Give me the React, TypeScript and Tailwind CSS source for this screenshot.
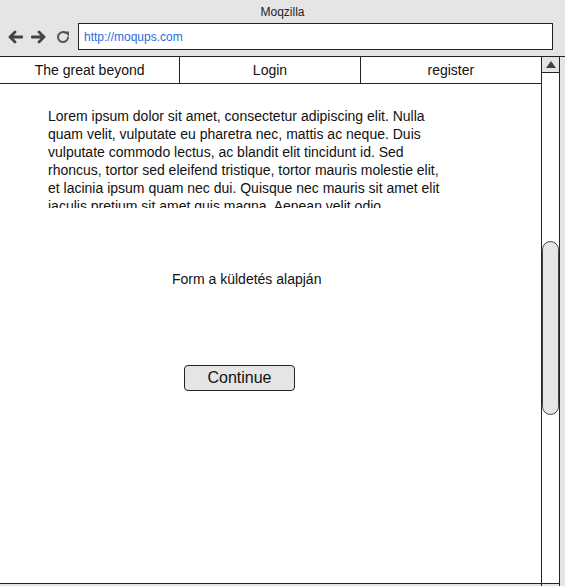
import React from 'react';

const navItems = ['The great beyond', 'Login', 'register'];

const lorem =
  'Lorem ipsum dolor sit amet, consectetur adipiscing elit. Nulla quam velit, vulputate eu pharetra nec, mattis ac neque. Duis vulputate commodo lectus, ac blandit elit tincidunt id. Sed rhoncus, tortor sed eleifend tristique, tortor mauris molestie elit, et lacinia ipsum quam nec dui. Quisque nec mauris sit amet elit iaculis pretium sit amet quis magna. Aenean velit odio, elementum in tempus ut, vehicula eu diam.';

// Browser chrome arrows + reload, drawn as they look in the mockup
const BackIcon = () => (
  <svg width="16" height="14" viewBox="0 0 16 14" className="text-[#444]">
    <path d="M15 7H3M8 2L3 7l5 5" fill="none" stroke="currentColor" strokeWidth="2.8" strokeLinecap="round" strokeLinejoin="round" />
  </svg>
);

const ForwardIcon = () => (
  <svg width="16" height="14" viewBox="0 0 16 14" className="text-[#444]">
    <path d="M1 7h12M8 2l5 5-5 5" fill="none" stroke="currentColor" strokeWidth="2.8" strokeLinecap="round" strokeLinejoin="round" />
  </svg>
);

const ReloadIcon = () => (
  <svg width="16" height="16" viewBox="0 0 16 16" className="text-[#555]">
    <path d="M13 8.5A5 5 0 1 1 11 4" fill="none" stroke="currentColor" strokeWidth="2" strokeLinecap="round" />
    <path d="M9 2.5h5v5z" fill="currentColor" />
  </svg>
);

const Scrollbar = () => (
  <div className="w-[19px] flex flex-col border-x border-[#222] bg-white">
    {/* Up arrow */}
    <div className="h-[16px] flex items-center justify-center border-b border-[#222] bg-[#e5e5e5]">
      <svg width="10" height="7" viewBox="0 0 10 7">
        <path d="M5 0l5 7H0z" fill="#444" />
      </svg>
    </div>
    {/* Track */}
    <div className="h-[510px] flex flex-col">
      <div className="h-[168px]" />
      <div className="h-[174px] rounded-full border border-[#444] bg-[#e5e5e5]" />
    </div>
    {/* Down arrow */}
    <div className="h-[16px] flex items-center justify-center border-t border-[#222] bg-[#e5e5e5]">
      <svg width="10" height="7" viewBox="0 0 10 7">
        <path d="M0 0h10L5 7z" fill="#444" />
      </svg>
    </div>
  </div>
);

const App = () => {
  return (
    <div className="w-[565px] h-[586px] overflow-hidden bg-[#e5e5e5] font-['Liberation_Sans',Arial,sans-serif] text-[#111]">
      {/* Browser header */}
      <header className="h-[56px] flex flex-col">
        <div className="h-[22px] flex items-center justify-center text-[12px] text-[#222] pt-[1px]">Moqzilla</div>
        <div className="flex items-center pl-[7px] pr-[12px] pt-[1px]">
          <div className="flex items-center gap-[8px] w-[71px]">
            <BackIcon />
            <ForwardIcon />
            <ReloadIcon />
          </div>
          <div className="flex-1 h-[27px] border border-[#222] bg-white flex items-center px-[5px] text-[12px] text-[#2b6de0]">
            http://moqups.com
          </div>
        </div>
      </header>

      {/* Window body */}
      <div className="h-[543px] flex border-t border-[#222] pr-[5px]">
        <main className="w-[541px] flex flex-col">
          <div className="h-[527px] bg-white border-b border-[#222] flex flex-col">
            {/* Nav */}
            <nav className="h-[27px] grid grid-cols-3 border-b border-[#222] text-[14px]">
              {navItems.map((item, i) => (
                <div
                  key={item}
                  className={`flex items-center justify-center ${i < 2 ? 'border-r border-[#222]' : ''}`}
                >
                  {item}
                </div>
              ))}
            </nav>

            {/* Text block */}
            <p className="ml-[48px] mt-[23px] w-[404px] h-[101px] overflow-hidden text-[14px] leading-[18px]">
              {lorem}
            </p>

            {/* Form */}
            <div className="mt-[61px] pl-[172px] text-[14px]">Form a küldetés alapján</div>

            <div className="mt-[75px] pl-[184px]">
              <button className="w-[111px] h-[26px] rounded-[4px] border border-[#222] bg-[#e5e5e5] text-[16px] leading-none">
                Continue
              </button>
            </div>
          </div>
        </main>
        <Scrollbar />
      </div>
    </div>
  );
};

export default App;
